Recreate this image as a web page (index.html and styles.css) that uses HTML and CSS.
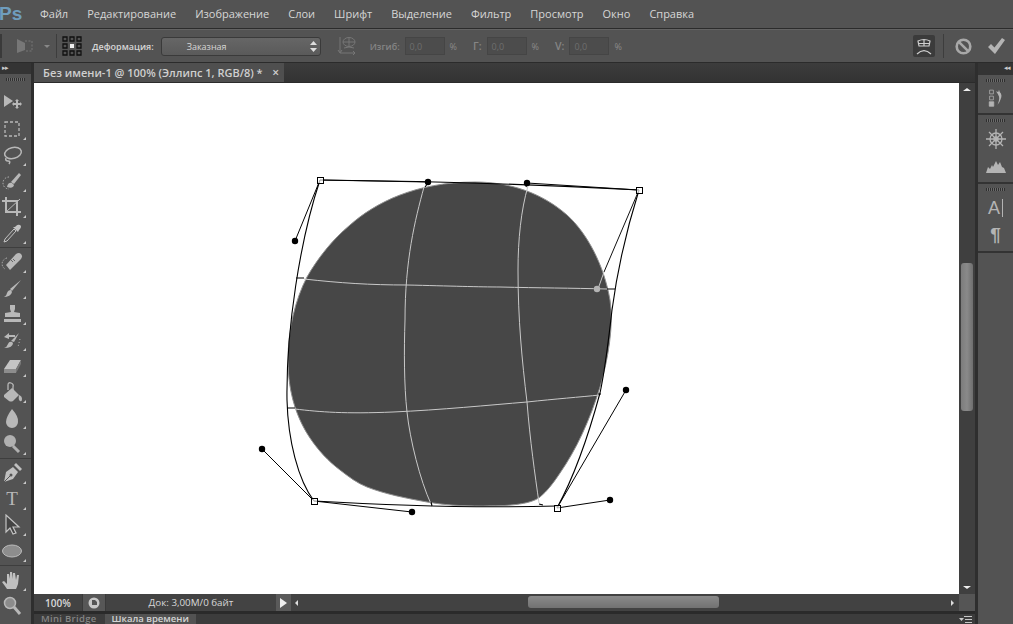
FILE: index.html
```html
<!DOCTYPE html>
<html lang="ru">
<head>
    <meta charset="UTF-8">
    <meta name="viewport" content="width=device-width, initial-scale=1.0">
    <title>Без имени-1</title>
    <link rel="stylesheet" href="styles.css">
</head>
<body>
    <div class="app">
        <!-- Меню -->
        <div class="menubar">
            <span class="logo">Ps</span>
            <span class="menu-item">Файл</span>
            <span class="menu-item">Редактирование</span>
            <span class="menu-item">Изображение</span>
            <span class="menu-item">Слои</span>
            <span class="menu-item">Шрифт</span>
            <span class="menu-item">Выделение</span>
            <span class="menu-item">Фильтр</span>
            <span class="menu-item">Просмотр</span>
            <span class="menu-item">Окно</span>
            <span class="menu-item">Справка</span>
        </div>

        <!-- Параметры -->
        <div class="optbar">
            <div class="grip"></div>
            <svg class="opt-transform" width="18" height="16" viewBox="0 0 18 16"><path d="M1 1l8 4v7l-8 3z" fill="#777"/><path d="M9 3h7v10H9" fill="none" stroke="#777" stroke-dasharray="2 1.5"/></svg>
            <span class="opt-caret"></span>
            <span class="opt-sep"></span>
            <svg class="opt-grid" width="20" height="20" viewBox="0 0 20 20" fill="none" stroke="#111" stroke-width="1.300">
                <path d="M1 1h4v4H1zM8 1h4v4H8zM15 1h4v4h-4zM1 8h4v4H1zM15 8h4v4h-4zM1 15h4v4H1zM8 15h4v4H8zM15 15h4v4h-4z"/>
                <rect x="8" y="8" width="4" height="4" fill="#eee" stroke="none"/>
            </svg>
            <span class="opt-label">Деформация:</span>
            <div class="select">
                <span>Заказная</span>
                <svg width="7" height="11" viewBox="0 0 7 11" fill="#ddd"><path d="M3.500 0l3.500 4H0zM3.500 11L0 7h7z"/></svg>
            </div>
            <svg class="opt-orient" width="20" height="20" viewBox="0 0 20 20" fill="none" stroke="#777"><ellipse cx="12" cy="6" rx="6" ry="4.500"/><path d="M6 6h12M12 2v8M7 12q5-2 10 0M3 1v15M1 14l2 3 2-3M3 17h15M16 15l2 2-2 2"/></svg>
            <span class="opt-field-label first">Изгиб:</span>
            <span class="opt-input">0,0</span>
            <span class="opt-pct">%</span>
            <span class="opt-field-label">Г:</span>
            <span class="opt-input">0,0</span>
            <span class="opt-pct">%</span>
            <span class="opt-field-label">V:</span>
            <span class="opt-input">0,0</span>
            <span class="opt-pct">%</span>
            <div class="opt-right">
                <div class="warp-toggle">
                    <svg width="18" height="18" viewBox="0 0 18 18" fill="none" stroke="#cfcfcf" stroke-width="1.200"><path d="M3 4q6-3 12 0l-1 5H4zM3 6.500h12M9 2.500v6.500"/><path d="M2 17q7-7 14 0"/></svg>
                </div>
                <span class="opt-sep"></span>
                <svg class="opt-cancel" width="17" height="17" viewBox="0 0 17 17" fill="none" stroke="#a8a8a8" stroke-width="2.600"><circle cx="8.500" cy="8.500" r="6.800"/><path d="M3.800 3.800l9.400 9.400"/></svg>
                <svg class="opt-commit" width="17" height="16" viewBox="0 0 17 16"><path d="M0 9l3-3 3.500 3.500L14 0l3 2L7 16z" fill="#b4b4b4"/></svg>
            </div>
        </div>

        <div class="workspace">
            <!-- Инструменты -->
            <div class="tools">
                <div class="panel-head"><span class="arrows">&#9656;&#9656;</span></div>
                <div class="grabber"></div>
                <div class="tool-group">
                    <div class="tool plain"><svg width="22" height="22" viewBox="0 0 22 22" fill="#b8b8b8"><path d="M3 3l9 6-9 6z"/><path d="M16 8l2 2h-1v2h2v-1l2 2-2 2v-1h-2v2h1l-2 2-2-2h1v-2h-2v1l-2-2 2-2v1h2v-2h-1z" transform="translate(0 -1)"/></svg></div>
                    <div class="tool"><svg width="22" height="22" viewBox="0 0 22 22" fill="none" stroke="#b8b8b8" stroke-width="1.300"><path d="M4 4h14v14H4z" stroke-dasharray="3 2"/></svg></div>
                    <div class="tool"><svg width="22" height="22" viewBox="0 0 22 22" fill="none" stroke="#b8b8b8" stroke-width="1.500"><ellipse cx="12" cy="9" rx="8.500" ry="5.500" transform="rotate(-14 12 9)"/><path d="M5 14q-1 3 2 3t1 3"/></svg></div>
                    <div class="tool"><svg width="22" height="22" viewBox="0 0 22 22"><path d="M8 7a6 6 0 1 0 0 12" fill="none" stroke="#b8b8b8" stroke-dasharray="1.500 1.500"/><path d="M10 12l8-9 2 2-7 9z" fill="#b8b8b8"/><path d="M6 17q1-5 5-4l2 2q-1 4-7 2z" fill="#b8b8b8"/></svg></div>
                    <div class="tool"><svg width="22" height="22" viewBox="0 0 22 22" fill="none" stroke="#b8b8b8" stroke-width="2"><path d="M5 1v15h15M1 5h15v15"/><path d="M5 16L19 3" stroke-width="1"/></svg></div>
                    <div class="tool"><svg width="22" height="22" viewBox="0 0 22 22"><path d="M13 7l-9 10-1 3 3-1 9-10z" fill="#555" stroke="#c4c4c4"/><path d="M12 5l5 5 1-2 1-1q2-3 0-4t-4 1l-1 1z" fill="#c4c4c4"/></svg></div>
                </div>
                <div class="tool-group">
                    <div class="tool"><svg width="24" height="22" viewBox="0 0 24 22"><path d="M6 14l10-11q3-2 5 0t0 5L10 19z" fill="#b8b8b8"/><path d="M7 7a6 6 0 0 0-2 11" fill="none" stroke="#b8b8b8" stroke-dasharray="1.500 1.500"/><path d="M11 9l2 2m0-3l2 2" stroke="#666"/></svg></div>
                    <div class="tool"><svg width="22" height="22" viewBox="0 0 22 22" fill="#b8b8b8"><path d="M9 12L20 3l-9 11z"/><path d="M2 20q3 0 4-4 1-3 4-3l1 2q-1 5-9 5z"/></svg></div>
                    <div class="tool"><svg width="22" height="22" viewBox="0 0 22 22" fill="#b8b8b8"><path d="M9 2h5v4l-1 3 6 1v4H4v-4l6-1-1-3z"/><path d="M3 16h17v3H3z"/></svg></div>
                    <div class="tool"><svg width="22" height="22" viewBox="0 0 22 22" fill="#b8b8b8"><path d="M10 12l8-8-5 9z"/><path d="M3 19q3-1 4-4 1-3 4-2l1 1q0 5-9 5z"/><path d="M3 8l5-4v2h6v2H8v2z"/><path d="M19 10l-2 8" stroke="#b8b8b8" stroke-dasharray="1 2" fill="none"/></svg></div>
                    <div class="tool"><svg width="22" height="22" viewBox="0 0 22 22"><path d="M9 5h11l-5 9H3z" fill="#c4c4c4"/><path d="M3 14h12v4H3z" fill="#8c8c8c"/><path d="M15 14l5-9v4l-5 9z" fill="#777"/></svg></div>
                    <div class="tool"><svg width="22" height="22" viewBox="0 0 22 22" fill="#b8b8b8"><path d="M3 14l8-7 7 7-6 6q-2 1-4 0l-5-4z"/><path d="M7 9V4q0-3 3-2t2 4v5" fill="none" stroke="#b8b8b8" stroke-width="1.300"/><path d="M18 14q3 1 3 4t-2 2-1-6z"/></svg></div>
                    <div class="tool"><svg width="22" height="22" viewBox="0 0 22 22"><path d="M11 2q7 8 6 13a6 6 0 0 1-12 0q0-5 6-13z" fill="#b8b8b8"/></svg></div>
                    <div class="tool"><svg width="22" height="22" viewBox="0 0 22 22"><circle cx="9" cy="8" r="6" fill="#b0b0b0"/><path d="M12 13l6 6" stroke="#b0b0b0" stroke-width="3"/></svg></div>
                </div>
                <div class="tool-group">
                    <div class="tool"><svg width="22" height="22" viewBox="0 0 22 22"><path d="M3 20l2-10 7-5 5 5-5 7z" fill="#c0c0c0"/><path d="M13 3l2-2 6 6-2 2z" fill="#c0c0c0"/><path d="M3 20l6-6" stroke="#555"/><circle cx="10" cy="13" r="1.500" fill="#555"/></svg></div>
                    <div class="tool"><span class="type-glyph">T</span></div>
                    <div class="tool"><svg width="22" height="22" viewBox="0 0 22 22"><path d="M5 1v17l4-4 3 6 3-1-3-6h6z" fill="#444" stroke="#c4c4c4" stroke-width="1.200"/></svg></div>
                    <div class="tool"><svg width="22" height="22" viewBox="0 0 22 22"><ellipse cx="11" cy="11" rx="9.500" ry="6" fill="#8d8d8d" stroke="#bcbcbc"/></svg></div>
                </div>
                <div class="tool-group last">
                    <div class="tool"><svg width="22" height="22" viewBox="0 0 22 22" fill="#c0c0c0"><path d="M6 20q-2-3-5-7l2-1 3 3V5l2 0 1 5V3h2l1 7V4h2l1 7 1-5h2l-1 9q-1 3-2 5z"/></svg></div>
                    <div class="tool plain"><svg width="22" height="22" viewBox="0 0 22 22"><circle cx="9" cy="8" r="5.500" fill="#8c8c8c" stroke="#b8b8b8" stroke-width="1.500"/><path d="M13 12l6 7" stroke="#b8b8b8" stroke-width="3"/></svg></div>
                </div>
            </div>
            <div class="gutter"></div>

            <div class="center">
                <div class="doc-tabs">
                    <div class="doc-tab">
                        <span>Без имени-1 @ 100% (Эллипс 1, RGB/8) *</span>
                        <span class="doc-close">&#215;</span>
                    </div>
                </div>
                <div class="doc-row">
                    <!-- Холст: координаты точек сетки заданы в пикселях окна -->
                    <div class="canvas">
                        <svg class="stage" viewBox="34 83 925 511" width="925" height="511">
                            <path class="blob" d="M288 360C288 330 295 300 307 277C318 258 332 240 350 225C375 203 415 182 475 182C510 182 542 193 567 215C587 233 604 265 610 300C614 325 608 360 600 387C590 420 576 450 560 473C552 485 547 491 540 497C530 505 505 506 483 506C460 506 445 505 427 502C405 498 385 494 367 487C357 483 349 477 340 470C328 461 318 450 310 438C298 420 288 395 288 360Z"/>
                            <g class="mesh-in">
                                <path d="M304 279C340 283 370 285 407 285C450 286 480 287 500 287C540 288 570 288 607 289"/>
                                <path d="M295 409C320 412 345 414 393 412C440 410 490 405 527 402C555 399 580 397 600 395"/>
                                <path d="M424 187C415 220 405 260 405 320C404 350 404 385 407 412C410 440 420 480 431 504"/>
                                <path d="M528 186C521 210 518 240 518 270C518 320 522 360 527 402C530 440 535 475 539 503"/>
                            </g>
                            <g class="mesh-out">
                                <path d="M320 180C420 181 530 184 639 190"/>
                                <path d="M320 180C300 240 286 330 287 400C288 440 298 480 314 501"/>
                                <path d="M639 190C628 225 618 265 612 310C608 345 604 375 600 393C590 430 575 475 557 508"/>
                                <path d="M314 501C400 506 480 508 557 506"/>
                                <path d="M296 278h8M607 289h8M287 408h8M598 394h3M428 183l-3 4M527 183l-1 4M431 502l1 4M543 505l-4-1"/>
                            </g>
                            <g class="handles">
                                <path d="M320 180L295 241M320 180L428 182M639 190L527 183M314 501L262 449M314 501L412 512M557 508L626 390M557 508L610 500"/>
                                <path class="handle-light" d="M639 190L604 272"/>
                                <path class="handle-pale" d="M604 272L598 289"/>
                                <circle cx="295" cy="241" r="3.200"/>
                                <circle cx="428" cy="182" r="3.200"/>
                                <circle cx="527" cy="183" r="3.200"/>
                                <circle cx="262" cy="449" r="3.200"/>
                                <circle cx="412" cy="512" r="3.200"/>
                                <circle cx="626" cy="390" r="3.200"/>
                                <circle cx="610" cy="500" r="3.200"/>
                                <circle class="dot-light" cx="597" cy="289" r="3.200"/>
                            </g>
                            <g class="anchors">
                                <rect x="317.500" y="177.500" width="6" height="6"/>
                                <rect x="636.500" y="187.500" width="6" height="6"/>
                                <rect x="311.500" y="498.500" width="6" height="6"/>
                                <rect x="554.500" y="505.500" width="6" height="6"/>
                            </g>
                        </svg>
                    </div>
                    <div class="vscroll">
                        <span class="tri-up"></span>
                        <div class="vtrack"><div class="vthumb"></div></div>
                        <span class="tri-down"></span>
                    </div>
                </div>
                <div class="status">
                    <span class="zoom-val">100%</span>
                    <span class="status-icon"><svg width="12" height="12" viewBox="0 0 12 12"><circle cx="6" cy="6" r="5.500" fill="#c8c8c8"/><path d="M4 3h3l2 2v3H4z" fill="#555"/></svg></span>
                    <span class="doc-size">Док: 3,00M/0 байт</span>
                    <span class="status-arrow"></span>
                    <div class="hscroll">
                        <span class="tri-left"></span>
                        <div class="htrack"><div class="hthumb"></div></div>
                        <span class="tri-right"></span>
                    </div>
                    <div class="corner"></div>
                </div>
                <div class="bottom-tabs">
                    <span class="bottom-tab">Mini Bridge</span>
                    <span class="bottom-tab active">Шкала времени</span>
                    <svg class="bottom-menu" width="13" height="7" viewBox="0 0 13 7" fill="#c8c8c8"><path d="M0 2h5L2.500 5zM5 0h8v1H5zM6 3h7v1H6zM6 6h7v1H6z"/></svg>
                </div>
            </div>
            <div class="gutter"></div>

            <!-- Панели справа -->
            <div class="dock">
                <div class="panel-head right"><span class="arrows">&#9666;&#9666;</span></div>
                <div class="dock-group g1">
                    <div class="grabber"></div>
                    <svg width="16" height="18" viewBox="0 0 20 24" fill="none" stroke="#b4b4b4"><path d="M1.500 1.500h5v5h-5zM1.500 9.500h5v5h-5z"/><path d="M1 17h6v6H1z" fill="#b4b4b4"/><path d="M10 3l3 1 1-3 1 3q4 4 1 10-1 4-4 7 3-7 2-11-1-3-4-7z" fill="#b4b4b4" stroke="none"/></svg>
                </div>
                <div class="dock-group g2">
                    <div class="grabber"></div>
                    <svg width="20" height="20" viewBox="0 0 20 20" fill="none" stroke="#b4b4b4" stroke-width="1.300"><circle cx="10" cy="10" r="6"/><circle cx="10" cy="10" r="2"/><path d="M10 0v20M0 10h20M3 3l14 14M17 3L3 17"/></svg>
                    <svg width="20" height="14" viewBox="0 0 20 14" fill="#b4b4b4"><path d="M0 14l2-6 2 2 2-4 1 2 3-6 2 4 2-3 2 5 2 1 2 5z"/></svg>
                </div>
                <div class="dock-group g3">
                    <div class="grabber"></div>
                    <span class="glyph-a">A<i></i></span>
                    <span class="glyph-p">&#182;</span>
                </div>
            </div>
        </div>
    </div>
</body>
</html>
```

FILE: styles.css
```css
* {
    box-sizing: border-box;
}
body {
    margin: 0;
    background: #535353;
    overflow: hidden;
}
.app {
    width: 1013px;
    height: 624px;
    display: flex;
    flex-direction: column;
    overflow: hidden;
    font-family: 'Open Sans', sans-serif;
    font-size: 11px;
    color: #d6d6d6;
}

/* menu */
.menubar {
    height: 29px;
    flex: none;
    display: flex;
    align-items: center;
    background: #535353;
    border-bottom: 1px solid #2b2b2b;
    padding-bottom: 1px;
}
.logo {
    width: 40px;
    margin-left: -1px;
    font-family: 'Liberation Sans', sans-serif;
    font-size: 19px;
    font-weight: bold;
    color: #6f9dbd;
}
.menu-item {
    margin-right: 18px;
    margin-left: 1px;
    font-size: 11px;
    white-space: nowrap;
}

/* options */
.optbar {
    height: 34px;
    flex: none;
    display: flex;
    align-items: center;
    background: #535353;
    border-top: 1px solid #636363;
    border-bottom: 1px solid #2b2b2b;
}
.grip {
    width: 2px;
    height: 24px;
    background: #3a3a3a;
}
.opt-transform {
    margin-left: 14px;
}
.opt-caret {
    width: 0;
    height: 0;
    margin-left: 10px;
    border-left: 3px solid transparent;
    border-right: 3px solid transparent;
    border-top: 3px solid #888;
}
.opt-sep {
    width: 1px;
    height: 24px;
    margin-left: 6px;
    background: #3d3d3d;
}
.opt-grid {
    margin-left: 5px;
}
.opt-label {
    margin-left: 10px;
    font-size: 9px;
    font-weight: 600;
}
.select {
    width: 160px;
    height: 19px;
    margin-left: 7px;
    padding: 0 3px 0 25px;
    display: flex;
    align-items: center;
    justify-content: space-between;
    background: linear-gradient(#666, #5a5a5a);
    border: 1px solid #3a3a3a;
    border-radius: 3px;
    font-size: 9px;
}
.opt-orient {
    margin-left: 16px;
}
.opt-field-label {
    margin-left: 16px;
    font-size: 10.500px;
    font-weight: 600;
    color: #858585;
}
.opt-field-label.first {
    margin-left: 13px;
    font-size: 9px;
}
.opt-input {
    width: 40px;
    height: 18px;
    margin-left: 5px;
    padding-left: 4px;
    line-height: 17px;
    background: #4c4c4c;
    border: 1px solid #454545;
    font-size: 9px;
    color: #6e6e6e;
}
.opt-pct {
    margin-left: 5px;
    font-size: 9px;
    color: #8a8a8a;
}
.opt-right {
    margin-left: auto;
    display: flex;
    align-items: center;
}
.warp-toggle {
    width: 22px;
    height: 22px;
    display: flex;
    align-items: center;
    justify-content: center;
    background: #3b3b3b;
    border-radius: 2px;
}
.opt-right .opt-sep {
    margin-left: 8px;
}
.opt-cancel {
    margin-left: 11px;
}
.opt-commit {
    margin-left: 16px;
    margin-right: 8px;
}

/* workspace */
.workspace {
    flex: 1;
    min-height: 0;
    display: flex;
}
.gutter {
    width: 3px;
    flex: none;
    background: #2e2e2e;
}
.panel-head {
    height: 11px;
    padding-left: 2px;
    background: #343434;
    font-size: 7px;
    line-height: 10px;
    letter-spacing: -1px;
    color: #ccc;
}
.panel-head.right {
    height: 12px;
    padding-right: 3px;
    text-align: right;
}
.grabber {
    height: 3px;
    margin: 4px auto 0;
    width: 19px;
    flex: none;
    background: repeating-linear-gradient(90deg, #2f2f2f 0 1px, #6b6b6b 1px 2px);
}

/* tools */
.tools {
    width: 31px;
    flex: none;
    background: #535353;
}
.tools .grabber {
    margin-bottom: 9px;
}
.tool-group {
    padding-bottom: 1px;
    margin-bottom: 1px;
    border-bottom: 1px solid #3e3e3e;
}
.tool-group.last {
    border-bottom: none;
}
.tool {
    position: relative;
    height: 26px;
    padding-right: 7px;
    display: flex;
    align-items: center;
    justify-content: center;
}
.tool::after {
    content: "";
    position: absolute;
    right: 5px;
    bottom: 2px;
    border-left: 3px solid transparent;
    border-bottom: 3px solid #c8c8c8;
}
.tool.plain::after {
    display: none;
}
.type-glyph {
    font-family: 'Liberation Serif', serif;
    font-size: 19px;
    color: #b8b8b8;
}

/* center */
.center {
    flex: 1;
    min-width: 0;
    display: flex;
    flex-direction: column;
}
.doc-tabs {
    height: 20px;
    flex: none;
    display: flex;
    background: linear-gradient(#3c3c3c, #333);
    border-bottom: 1px solid #2b2b2b;
}
.doc-tab {
    width: 250px;
    padding: 0 3px 0 9px;
    display: flex;
    align-items: center;
    justify-content: space-between;
    background: #4f4f4f;
    font-size: 11px;
    font-weight: 600;
    color: #cfcfcf;
    white-space: nowrap;
}
.doc-close {
    font-size: 12px;
    padding-right: 2px;
}
.doc-row {
    flex: 1;
    min-height: 0;
    display: flex;
}
.canvas {
    flex: 1;
    min-width: 0;
    overflow: hidden;
    background: #fff;
}
.stage {
    display: block;
}
.blob {
    fill: #474747;
    stroke: #8e8e8e;
    stroke-width: 1;
}
.mesh-in path {
    fill: none;
    stroke: #c9c9c9;
    stroke-width: 1;
}
.mesh-out path {
    fill: none;
    stroke: #000;
    stroke-width: 1.100;
}
.handles path {
    fill: none;
    stroke: #000;
    stroke-width: 1;
}
.handles .handle-light {
    stroke: #111;
}
.handles .handle-pale {
    stroke: #c9c9c9;
}
.handles circle {
    fill: #000;
}
.handles .dot-light {
    fill: #b4b4b4;
}
.anchors rect {
    fill: #fff;
    fill-opacity: 0.7;
    stroke: #000;
    stroke-width: 1;
}
.vscroll {
    width: 16px;
    flex: none;
    display: flex;
    flex-direction: column;
    align-items: center;
    padding: 5px 0;
    background: #3f3f3f;
}
.vtrack {
    flex: 1;
    width: 100%;
    padding-top: 172px;
}
.vthumb {
    width: 12px;
    height: 148px;
    margin-left: 2px;
    background: linear-gradient(90deg, #7c7c7c, #8a8a8a 50%, #6e6e6e);
    border-radius: 3px;
}
.tri-up {
    border-left: 4px solid transparent;
    border-right: 4px solid transparent;
    border-bottom: 3px solid #eee;
}
.tri-down {
    border-left: 4px solid transparent;
    border-right: 4px solid transparent;
    border-top: 3px solid #eee;
}

/* status */
.status {
    height: 17px;
    flex: none;
    display: flex;
    align-items: center;
    background: #434343;
    font-size: 10px;
    color: #d8d8d8;
}
.zoom-val {
    width: 48px;
    padding-left: 11px;
    font-weight: 600;
}
.status-icon {
    width: 24px;
    height: 17px;
    display: flex;
    align-items: center;
    justify-content: center;
    background: #575757;
    border-left: 1px solid #3a3a3a;
    border-right: 1px solid #3a3a3a;
}
.doc-size {
    width: 170px;
    text-align: center;
    font-size: 9.800px;
}
.status-arrow {
    width: 15px;
    height: 17px;
    background: #5a5a5a;
    position: relative;
}
.status-arrow::after {
    content: "";
    position: absolute;
    left: 4px;
    top: 4px;
    border-top: 5px solid transparent;
    border-bottom: 5px solid transparent;
    border-left: 7px solid #eee;
}
.hscroll {
    flex: 1;
    height: 17px;
    display: flex;
    align-items: center;
    padding: 0 5px 0 4px;
    background: #424242;
}
.htrack {
    flex: 1;
    padding-left: 230px;
}
.hthumb {
    width: 191px;
    height: 12px;
    margin-top: -2px;
    background: linear-gradient(#8a8a8a, #727272);
    border-radius: 3px;
}
.tri-left {
    border-top: 3px solid transparent;
    border-bottom: 3px solid transparent;
    border-right: 3px solid #ddd;
}
.tri-right {
    border-top: 3px solid transparent;
    border-bottom: 3px solid transparent;
    border-left: 3px solid #ddd;
}
.corner {
    width: 16px;
    height: 17px;
    background: #555;
}
.bottom-tabs {
    height: 13px;
    flex: none;
    display: flex;
    align-items: flex-start;
    gap: 1px;
    position: relative;
    background: #3c3c3c;
    border-top: 3px solid #2a2a2a;
}
.bottom-tab {
    height: 10px;
    padding: 0 7px;
    line-height: 10px;
    font-size: 9.500px;
    letter-spacing: 0.3px;
    font-weight: 600;
    color: #858585;
    white-space: nowrap;
}
.bottom-tab.active {
    letter-spacing: 0;
    background: #525252;
    color: #d4d4d4;
}
.bottom-menu {
    position: absolute;
    right: 3px;
    top: 2px;
}

/* dock */
.dock {
    width: 35px;
    flex: none;
    background: #535353;
}
.dock-group {
    display: flex;
    flex-direction: column;
    align-items: center;
    border-bottom: 2px solid #333;
}
.g1 {
    height: 40px;
    gap: 7px;
}
.g2 {
    height: 69px;
    gap: 7px;
}
.g2 svg:last-child {
    margin-top: 3px;
}
.g3 {
    height: 69px;
}
.glyph-a {
    margin-top: 5px;
    display: flex;
    font-family: 'Liberation Sans', sans-serif;
    font-size: 18px;
    line-height: 24px;
    color: #b4b4b4;
}
.glyph-a i {
    width: 1px;
    height: 18px;
    margin: 3px 0 0 2px;
    background: #b4b4b4;
}
.glyph-p {
    font-family: 'Liberation Sans', sans-serif;
    font-size: 19px;
    font-weight: bold;
    line-height: 30px;
    color: #b4b4b4;
}
```
